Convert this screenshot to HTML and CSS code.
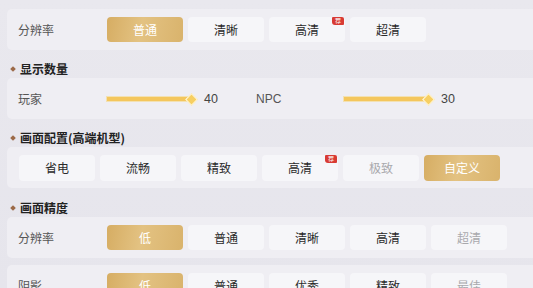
FILE: index.html
```html
<!DOCTYPE html>
<html lang="zh">
<head>
<meta charset="utf-8">
<link rel="stylesheet" href="styles.css">
</head>
<body>
<div class="page">
  <div class="panel">
    <div class="label">分辨率</div>
    <div class="opts">
      <div class="btn on">普通</div>
      <div class="btn">清晰</div>
      <div class="btn">高清<span class="tag">荐</span></div>
      <div class="btn">超清</div>
    </div>
  </div>

  <div class="head"><span class="dot"></span>显示数量</div>
  <div class="panel">
    <div class="label">玩家</div>
    <div class="slider"><div class="track"></div><div class="thumb"></div></div>
    <div class="val">40</div>
    <div class="label npc">NPC</div>
    <div class="slider"><div class="track"></div><div class="thumb"></div></div>
    <div class="val">30</div>
  </div>

  <div class="head"><span class="dot"></span>画面配置(高端机型)</div>
  <div class="panel wide">
    <div class="opts">
      <div class="btn">省电</div>
      <div class="btn">流畅</div>
      <div class="btn">精致</div>
      <div class="btn">高清<span class="tag">荐</span></div>
      <div class="btn off">极致</div>
      <div class="btn on">自定义</div>
    </div>
  </div>

  <div class="head h3"><span class="dot"></span>画面精度</div>
  <div class="panel">
    <div class="label">分辨率</div>
    <div class="opts">
      <div class="btn on">低</div>
      <div class="btn">普通</div>
      <div class="btn">清晰</div>
      <div class="btn">高清</div>
      <div class="btn off">超清</div>
    </div>
  </div>
  <div class="panel p5">
    <div class="label">阴影</div>
    <div class="opts">
      <div class="btn on">低</div>
      <div class="btn">普通</div>
      <div class="btn">优秀</div>
      <div class="btn">精致</div>
      <div class="btn off">最佳</div>
    </div>
  </div>
</div>
</body>
</html>
```

FILE: styles.css
```css
html, body {
  margin: 0;
  padding: 0;
}
body {
  width: 533px;
  height: 288px;
  overflow: hidden;
  background: linear-gradient(180deg, #e9e8ee, #e6e5ec);
  font-family: "Noto Sans CJK SC", "Noto Sans", sans-serif;
  color: #333;
}
.page {
  padding: 9px 0 0 7px;
}
.panel {
  height: 41px;
  display: flex;
  align-items: center;
  background: #efeef3;
  border-radius: 5px 0 0 5px;
  padding-left: 11px;
}
.panel.wide {
  padding-left: 12px;
}
.p5 {
  margin-top: 7px;
}
.label {
  width: 89px;
  flex: none;
  font-size: 12px;
  color: #555;
  line-height: 16px;
}
.label.npc {
  font-family: "Liberation Sans", sans-serif;
  font-size: 12px;
  width: 88px;
}
.opts {
  display: flex;
  gap: 5px;
}
.btn {
  position: relative;
  width: 76px;
  height: 25px;
  line-height: 25px;
  text-align: center;
  font-size: 12px;
  color: #2a2a2a;
  background: #f6f6f9;
  border-radius: 4px;
}
.wide .btn {
  height: 26px;
  line-height: 26px;
}
.btn.on {
  color: #fff;
  background: linear-gradient(100deg, #d6ad63 0%, #e3c282 45%, #d9b36c 100%);
}
.btn.off {
  color: #a9a9ad;
}
.tag {
  position: absolute;
  top: 0;
  right: 1px;
  width: 12px;
  height: 8px;
  background: #d83a33;
  border-radius: 1px 2px 1px 3px;
  color: #fff;
  font-size: 6px;
  line-height: 8px;
  text-align: center;
}
.head {
  height: 18px;
  padding: 10px 0 0 4px;
  display: flex;
  align-items: center;
  font-size: 12px;
  font-weight: bold;
  color: #222;
  line-height: 18px;
}
.head.h3 {
  padding-top: 11px;
}
.dot {
  width: 4px;
  height: 4px;
  background: #9c6a48;
  transform: rotate(45deg);
  margin-right: 5px;
}
.slider {
  position: relative;
  width: 90px;
  height: 12px;
  flex: none;
}
.track {
  position: absolute;
  left: 0;
  right: 5px;
  top: 4px;
  height: 4px;
  background: #f4c65c;
  box-shadow: 0 0 0 1px #f3e1b2;
}
.thumb {
  position: absolute;
  right: 1px;
  top: 2px;
  width: 7px;
  height: 7px;
  background: #f7cf62;
  border: 1px solid #fff7de;
  transform: rotate(45deg);
}
.val {
  width: 52px;
  flex: none;
  padding-left: 7px;
  font-family: "Liberation Sans", sans-serif;
  font-size: 12.5px;
  color: #444;
}
```
